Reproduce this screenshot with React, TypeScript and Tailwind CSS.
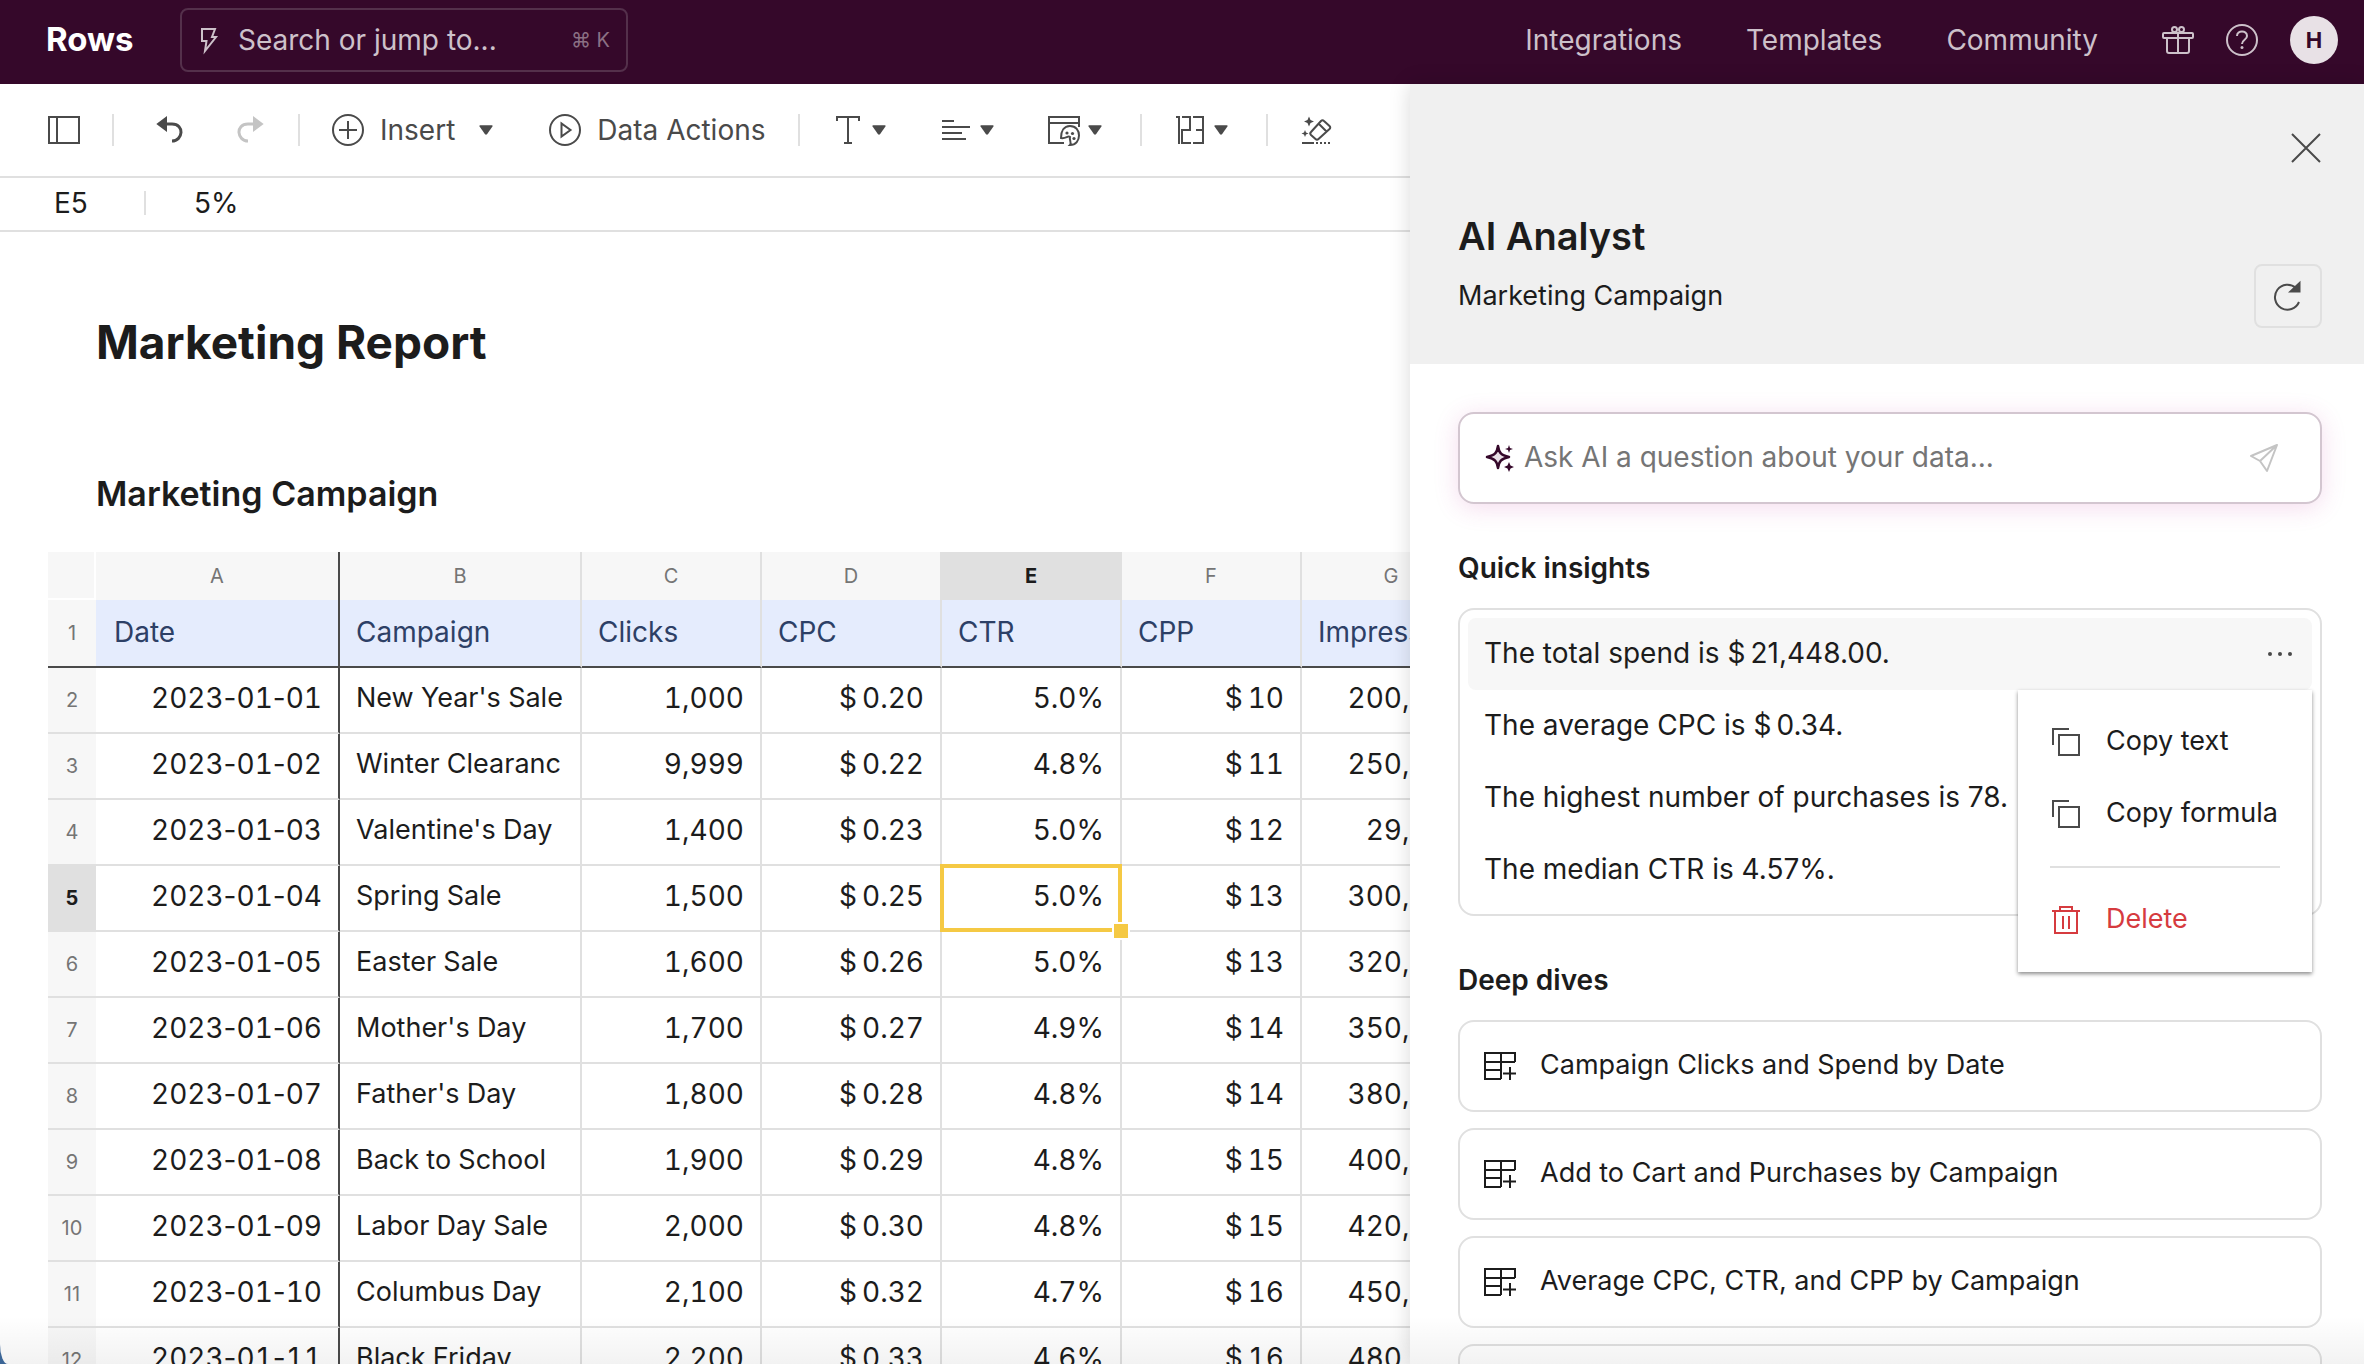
import React, { useState } from 'react';

interface IconProps {
  className?: string;
}

interface CampaignRow {
  date: string;
  campaign: string;
  clicks: string;
  cpc: string;
  ctr: string;
  cpp: string;
  impressions: string;
}

const rows: CampaignRow[] = [
  { date: '2023-01-01', campaign: "New Year's Sale", clicks: '1,000', cpc: '0.20', ctr: '5.0%', cpp: '10', impressions: '200,000' },
  { date: '2023-01-02', campaign: 'Winter Clearanc', clicks: '9,999', cpc: '0.22', ctr: '4.8%', cpp: '11', impressions: '250,000' },
  { date: '2023-01-03', campaign: "Valentine's Day", clicks: '1,400', cpc: '0.23', ctr: '5.0%', cpp: '12', impressions: '29,000' },
  { date: '2023-01-04', campaign: 'Spring Sale', clicks: '1,500', cpc: '0.25', ctr: '5.0%', cpp: '13', impressions: '300,000' },
  { date: '2023-01-05', campaign: 'Easter Sale', clicks: '1,600', cpc: '0.26', ctr: '5.0%', cpp: '13', impressions: '320,000' },
  { date: '2023-01-06', campaign: "Mother's Day", clicks: '1,700', cpc: '0.27', ctr: '4.9%', cpp: '14', impressions: '350,000' },
  { date: '2023-01-07', campaign: "Father's Day", clicks: '1,800', cpc: '0.28', ctr: '4.8%', cpp: '14', impressions: '380,000' },
  { date: '2023-01-08', campaign: 'Back to School', clicks: '1,900', cpc: '0.29', ctr: '4.8%', cpp: '15', impressions: '400,000' },
  { date: '2023-01-09', campaign: 'Labor Day Sale', clicks: '2,000', cpc: '0.30', ctr: '4.8%', cpp: '15', impressions: '420,000' },
  { date: '2023-01-10', campaign: 'Columbus Day', clicks: '2,100', cpc: '0.32', ctr: '4.7%', cpp: '16', impressions: '450,000' },
  { date: '2023-01-11', campaign: 'Black Friday', clicks: '2,200', cpc: '0.33', ctr: '4.6%', cpp: '16', impressions: '480,000' },
];

const columns = ['A', 'B', 'C', 'D', 'E', 'F', 'G'];
const headers = ['Date', 'Campaign', 'Clicks', 'CPC', 'CTR', 'CPP', 'Impressions'];

const insights = [
  'The total spend is $\u200921,448.00.',
  'The average CPC is $\u20090.34.',
  'The highest number of purchases is 78.',
  'The median CTR is 4.57%.',
];

const deepDives = [
  'Campaign Clicks and Spend by Date',
  'Add to Cart and Purchases by Campaign',
  'Average CPC, CTR, and CPP by Campaign',
  'Impressions and Clicks by Campaign',
];

const Svg = ({ className = 'size-8', children }: IconProps & { children: React.ReactNode }) => (
  <svg viewBox="0 0 32 32" fill="none" stroke="currentColor" strokeWidth="2" className={`shrink-0 ${className}`} aria-hidden="true">
    {children}
  </svg>
);

const Caret = () => (
  <svg viewBox="0 0 12 10" fill="currentColor" className="w-[14px] h-3 shrink-0" aria-hidden="true">
    <path d="M1 1h10q1 0 .5 1L7 8.500q-1 1-2 0L.5 2Q0 1 1 1Z" />
  </svg>
);

const BoltIcon = () => (
  <Svg>
    <path d="M8 5h13l-3 8h4L11 27l1.500-10H8Z" />
  </Svg>
);

const GiftIcon = () => (
  <Svg>
    <rect x="1" y="9" width="30" height="5" rx="1" />
    <path d="M5 14v13q0 2 2 2h18q2 0 2-2V14M16 9v20" />
    <circle cx="12.500" cy="5.500" r="2.500" />
    <circle cx="19.500" cy="5.500" r="2.500" />
  </Svg>
);

const HelpIcon = () => (
  <Svg>
    <circle cx="16" cy="16" r="15" />
    <path d="M11 12c0-6 10-6 10 0 0 4-5 3.500-5 8" />
    <circle cx="16" cy="23.500" r="1.500" fill="currentColor" stroke="none" />
  </Svg>
);

const SidebarIcon = () => (
  <Svg>
    <path d="M1 3h30v26H1zM9 3v26" />
  </Svg>
);

const UndoIcon = () => (
  <Svg>
    <path d="M8 10h10c13 0 11 17 0 17" strokeWidth="3" />
    <path d="M12 4v12L4 10Z" fill="currentColor" />
  </Svg>
);

const RedoIcon = () => (
  <Svg>
    <path d="M24 10H14C1 10 3 27 14 27" strokeWidth="3" />
    <path d="M20 4v12l8-6Z" fill="currentColor" />
  </Svg>
);

const PlusCircleIcon = () => (
  <Svg>
    <circle cx="16" cy="16" r="15" />
    <path d="M16 7v18M7 16h18" />
  </Svg>
);

const PlayCircleIcon = () => (
  <Svg>
    <circle cx="16" cy="16" r="15" />
    <path d="M12.500 9.500v13l9-6.500Z" />
  </Svg>
);

const TextIcon = () => (
  <Svg>
    <path d="M5 7V3h22v4M16 3v26M12 29h8" />
  </Svg>
);

const AlignIcon = () => (
  <Svg>
    <path d="M2 7h12M2 13h28M2 19h20M2 25h24" />
  </Svg>
);

const PaletteIcon = () => (
  <Svg>
    <path d="M16 29H1V3h30v10M1 9h30" />
    <path d="M22 31c2-2-1-5 0-8-2-2-4 2-9 1 0-7 3-12 9-12 12 0 12 19 0 19Z" />
    <g fill="currentColor" stroke="none">
      <circle cx="19" cy="19" r="1.600" />
      <circle cx="24.500" cy="19.500" r="1.600" />
      <circle cx="26" cy="24.500" r="1.600" />
    </g>
  </Svg>
);

const NumberIcon = () => (
  <Svg>
    <path d="M2 3h3v27M8 3h8v13H8v13h9M19 3h10v26H19M22 16h7" />
  </Svg>
);

const EraserIcon = () => (
  <Svg>
    <path d="m11 18 10-11q1.500-1.500 3 0l5.500 5q1.500 1.500 0 3L18.500 25q-1.500 1.500-3 0L11 21q-1.500-1.500 0-3ZM19 10l7.500 7.500" />
    <path d="M2 29h12M16 29h2M20 29h2M24 29h2M28 29h2" />
    <path d="M9 2.500 10.500 6 14 7.500 10.500 9 9 12.500 7.500 9 4 7.500 7.500 6ZM5 16l1 2.500L8.500 19.500 6 20.500 5 23 4 20.500 1.500 19.500 4 18.500Z" fill="currentColor" stroke="none" />
  </Svg>
);

const CloseIcon = () => (
  <Svg>
    <path d="m2 2 28 28M30 2 2 30" />
  </Svg>
);

const RefreshIcon = () => (
  <Svg>
    <path d="M27 22a12.500 12.500 0 1 1-3-14" />
    <path d="M27.500 3v8.500H18.500Z" fill="currentColor" />
  </Svg>
);

const SparkleIcon = () => (
  <Svg>
    <path d="M14 4c1 7 3 9 11 11-8 2-10 4-11 11-1-7-3-9-11-11 8-2 10-4 11-11Z" fill="#e8dfe6" strokeWidth="2.500" strokeLinejoin="round" />
    <path d="M25 3l1 3 3 1-3 1-1 3-1-3-3-1 3-1ZM25 20l1.500 3.500L30 25l-3.500 1.500L25 30l-1.500-3.500L20 25l3.500-1.500Z" fill="currentColor" stroke="none" />
  </Svg>
);

const SendIcon = () => (
  <Svg>
    <path d="M29 3 3 14l9 5 7 10ZM29 3 12 19" strokeLinejoin="round" />
  </Svg>
);

const CopyIcon = () => (
  <Svg>
    <path d="M3 19V3h16M9 9h20v20H9z" />
  </Svg>
);

const TrashIcon = () => (
  <Svg>
    <path d="M2 7h28M5 7v22h22V7M10 7V3h12v4M13 12v13M19 12v13" />
  </Svg>
);

const TableAddIcon = () => (
  <Svg>
    <path d="M17 29H1V3h30v9M1 12h30M1 20h16M17 3v26M26 17v13M19 23.500h13" />
  </Svg>
);

const Divider = () => <span className="w-[2px] h-8 bg-[#e0e0e0] shrink-0" />;

const TopBar = () => (
  <header className="flex items-center h-[84px] pb-1 pl-[46px] pr-[26px] bg-[#35082a] text-[#cdc1ca] text-[28px] shrink-0">
    <a href="#" className="w-[134px] text-white text-[33px] font-bold">Rows</a>
    <button className="flex items-center h-16 w-[448px] pl-3 pr-4 border-2 border-[#54304b] rounded-lg">
      <BoltIcon />
      <span className="ml-3">Search or jump to...</span>
      <span className="ml-auto text-[20px] text-[#8b7084]">⌘ K</span>
    </button>
    <nav className="flex items-center gap-16 ml-auto">
      <a href="#">Integrations</a>
      <a href="#">Templates</a>
      <a href="#">Community</a>
    </nav>
    <div className="flex items-center gap-8 ml-16">
      <button aria-label="What's new"><GiftIcon /></button>
      <button aria-label="Help"><HelpIcon /></button>
      <button className="size-12 rounded-full bg-[#e8e1e6] text-[#35082a] text-[22px] font-bold">H</button>
    </div>
  </header>
);

const Toolbar = () => (
  <div className="flex items-center h-[94px] px-12 border-b-2 border-[#e0e0e0] text-[#4a4a4a] text-[28px] shrink-0">
    <button aria-label="Toggle sidebar" className="mr-8"><SidebarIcon /></button>
    <Divider />
    <button aria-label="Undo" className="ml-10 mr-12"><UndoIcon /></button>
    <button aria-label="Redo" className="mr-8 text-[#c4c4c4]"><RedoIcon /></button>
    <Divider />
    <button className="flex items-center ml-8">
      <PlusCircleIcon />
      <span className="ml-4 mr-6">Insert</span>
      <Caret />
    </button>
    <button className="flex items-center gap-4 ml-14 mr-8">
      <PlayCircleIcon />
      Data Actions
    </button>
    <Divider />
    <button aria-label="Text style" className="flex items-center gap-2 ml-8"><TextIcon /><Caret /></button>
    <button aria-label="Alignment" className="flex items-center gap-2 ml-[54px]"><AlignIcon /><Caret /></button>
    <button aria-label="Cell colour" className="flex items-center gap-2 ml-[54px] mr-[38px]"><PaletteIcon /><Caret /></button>
    <Divider />
    <button aria-label="Number format" className="flex items-center gap-2 ml-8 mr-[38px]"><NumberIcon /><Caret /></button>
    <Divider />
    <button aria-label="Clear formatting" className="ml-8"><EraserIcon /></button>
  </div>
);

const FormulaBar = () => (
  <div className="flex items-center h-[54px] pb-0.5 border-b-2 border-[#e0e0e0] text-[28px] shrink-0">
    <span className="w-36 pl-[54px]">E5</span>
    <span className="w-[2px] h-6 bg-[#e0e0e0]" />
    <input aria-label="Cell value" defaultValue="5%" className="flex-1 min-w-0 pl-12 outline-none" />
  </div>
);

// dashes keep their own width while the digits stay tabular
const DateValue = ({ value }: { value: string }) => (
  <>
    {value.split('-').map((part, i) => (
      <React.Fragment key={i}>
        {i > 0 && <span className="normal-nums">-</span>}
        {part}
      </React.Fragment>
    ))}
  </>
);

const Sheet = () => {
  const [selected] = useState({ row: 3, col: 4 });

  return (
    <table className="w-[1434px] table-fixed border-separate border-spacing-0 text-[28px]">
      <colgroup>
        <col className="w-12" />
        <col className="w-[244px]" />
        <col className="w-[242px]" />
        <col className="w-[180px]" />
        <col className="w-[180px]" />
        <col className="w-[180px]" />
        <col className="w-[180px]" />
        <col className="w-[180px]" />
      </colgroup>
      <thead>
        <tr className="h-12 text-[20px]">
          <td className="bg-[#f7f7f7] border-b-2 border-r-2 border-white" />
          {columns.map((col, i) => (
            <th
              key={col}
              scope="col"
              className={`p-0 border-r-2 ${i === 0 ? 'border-[#4a4a4a]' : 'border-[#e0e0e0]'} ${
                i === selected.col ? 'bg-[#e0e0e0] text-[#1c1c1c] font-bold' : 'bg-[#f7f7f7] text-[#757575] font-normal'
              }`}
            >
              {col}
            </th>
          ))}
        </tr>
        <tr className="h-[68px]">
          <th scope="row" className="p-0 bg-[#f7f7f7] border-b-2 border-[#4a4a4a] text-[20px] text-[#757575] font-normal">1</th>
          {headers.map((header, i) => (
            <th
              key={header}
              className={`p-0 pb-0.5 text-left font-normal bg-[#e5ecfd] text-[#2d4066] border-b-2 border-b-[#4a4a4a] border-r-2 ${
                i === 0 ? 'pl-[18px] border-r-[#4a4a4a]' : 'pl-4 border-r-[#e0e0e0]'
              }`}
            >
              {header}
            </th>
          ))}
        </tr>
      </thead>
      <tbody>
        {rows.map((row, r) => (
          <tr key={row.date} className="h-[66px] leading-8">
            <th
              scope="row"
              className={`p-0 border-b-2 border-[#e0e0e0] text-[20px] ${
                r === selected.row ? 'bg-[#e0e0e0] text-[#1c1c1c] font-bold' : 'bg-[#f7f7f7] text-[#757575] font-normal'
              }`}
            >
              {r + 2}
            </th>
            {[row.date, row.campaign, row.clicks, `$\u2009${row.cpc}`, row.ctr, `$\u2009${row.cpp}`, row.impressions].map((value, c) => (
              <td
                key={c}
                className={`relative p-0 px-4 pb-1 whitespace-nowrap tabular-nums border-b-2 border-b-[#e0e0e0] border-r-2 ${
                  c === 0 ? 'border-r-[#4a4a4a]' : 'border-r-[#e0e0e0]'
                } ${c === 1 ? 'text-left text-[27px]' : 'text-right'}`}
              >
                {c === 0 ? <DateValue value={value} /> : value}
                {r === selected.row && c === selected.col && (
                  <span className="absolute z-10 -inset-[2px] border-4 border-[#f5c944]">
                    <span className="absolute -right-3 -bottom-3 size-[18px] border-2 border-white bg-[#f5c944]" />
                  </span>
                )}
              </td>
            ))}
          </tr>
        ))}
      </tbody>
    </table>
  );
};

const InsightMenu = () => (
  <div className="absolute z-10 top-[72px] right-0 w-[294px] py-4 bg-white text-[27px] shadow-[0_2px_4px_rgba(0,0,0,0.45)]">
    <button className="flex items-center gap-6 w-full h-[72px] pl-8 whitespace-nowrap">
      <span className="text-[#4a4a4a]"><CopyIcon /></span>
      <span className="pb-0.5">Copy text</span>
    </button>
    <button className="flex items-center gap-6 w-full h-[72px] pl-8 whitespace-nowrap">
      <span className="text-[#4a4a4a]"><CopyIcon /></span>
      <span className="pb-0.5">Copy formula</span>
    </button>
    <hr className="my-4 mx-8 border-t-2 border-[#e0e0e0]" />
    <button className="flex items-center gap-6 w-full h-[72px] pl-8 text-[#d63b3f]">
      <TrashIcon />
      <span className="pb-0.5">Delete</span>
    </button>
  </div>
);

const AnalystPanel = () => {
  const [question, setQuestion] = useState('');

  return (
    <aside className="relative z-20 flex flex-col w-[954px] shrink-0 bg-white shadow-[0_0_20px_rgba(0,0,0,0.15)] text-[28px]">
      <div className="flex flex-col h-[280px] pl-12 pr-[42px] pt-12 bg-[#f0f0f0] shrink-0">
        <button aria-label="Close" className="self-end text-[#4a4a4a]"><CloseIcon /></button>
        <h2 className="mt-8 text-[38px] leading-[80px] font-semibold">AI Analyst</h2>
        <div className="flex justify-between">
          <p className="text-[27px] leading-10">Marketing Campaign</p>
          <button aria-label="Refresh" className="flex items-center justify-center w-[68px] h-16 -mt-3 border-2 border-[#e0e0e0] rounded-lg text-[#4a4a4a]">
            <RefreshIcon />
          </button>
        </div>
      </div>

      <div className="flex flex-col pl-12 pr-[42px] pt-12">
        <form className="flex items-center h-[92px] pl-6 pr-10 border-2 border-[#d3c6d0] rounded-2xl shadow-[0_4px_24px_rgba(200,60,160,0.18)]">
          <span className="text-[#35082a]"><SparkleIcon /></span>
          <input
            aria-label="Ask AI"
            value={question}
            onChange={(e) => setQuestion(e.target.value)}
            placeholder="Ask AI a question about your data..."
            className="flex-1 min-w-0 ml-2 pb-0.5 outline-none placeholder:text-[#757575]"
          />
          <button type="button" aria-label="Send" className="text-[#c4c4c4]"><SendIcon /></button>
        </form>

        <h3 className="mt-11 leading-10 font-semibold">Quick insights</h3>
        <ul className="mt-5 p-2 border-2 border-[#e0e0e0] rounded-2xl">
          {insights.map((insight, i) => (
            <li key={insight} className={`relative flex items-center justify-between h-[72px] pl-4 pr-4 rounded-lg ${i === 0 ? 'bg-[#f7f7f7]' : ''}`}>
              <span className="pb-0.5">{insight}</span>
              {i === 0 && (
                <>
                  <button aria-label="More options" className="text-[#4a4a4a]">
                    <Svg>
                      <g fill="currentColor" stroke="none">
                        <circle cx="6" cy="16" r="2" />
                        <circle cx="16" cy="16" r="2" />
                        <circle cx="26" cy="16" r="2" />
                      </g>
                    </Svg>
                  </button>
                  <InsightMenu />
                </>
              )}
            </li>
          ))}
        </ul>

        <h3 className="mt-11 leading-10 font-semibold">Deep dives</h3>
        <div className="flex flex-col gap-4 mt-5">
          {deepDives.map((dive) => (
            <button key={dive} className="flex items-center gap-6 h-[92px] px-6 border-2 border-[#e0e0e0] rounded-2xl text-left text-[27px]">
              <TableAddIcon />
              <span className="pb-0.5">{dive}</span>
            </button>
          ))}
        </div>
      </div>
    </aside>
  );
};

export default function App() {
  return (
    <div className="h-screen bg-[#3b6596]">
      <div className="relative flex flex-col h-full overflow-hidden bg-white text-[#1c1c1c] rounded-bl-[8px_20px] font-['Inter',sans-serif]">
        <TopBar />
        <div className="flex flex-1 min-h-0">
          <main className="flex flex-col flex-1 min-w-0 overflow-hidden">
            <Toolbar />
            <FormulaBar />
            <div className="pt-20 pl-12 shrink-0">
              <h1 className="pl-12 text-[46px] leading-[60px] font-bold">Marketing Report</h1>
              <h2 className="pl-12 pt-[100px] pb-9 text-[34px] leading-[44px] font-semibold">Marketing Campaign</h2>
              <Sheet />
            </div>
          </main>
          <AnalystPanel />
        </div>
        <div className="absolute z-30 bottom-0 inset-x-0 h-12 bg-linear-to-t from-black/5 to-transparent pointer-events-none" />
      </div>
    </div>
  );
}
